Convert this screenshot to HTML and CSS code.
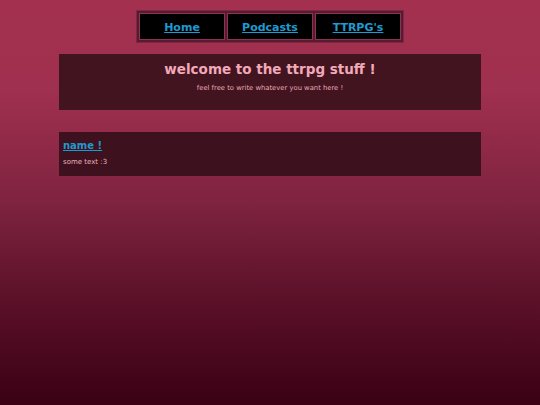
FILE: index.html
```html
<!DOCTYPE html>
<html>
<head>
<meta charset="utf-8">
<link rel="stylesheet" href="styles.css">
</head>
<body>
<div class="page">
  <nav class="nav">
    <a class="nav-cell" href="#">Home</a>
    <a class="nav-cell" href="#">Podcasts</a>
    <a class="nav-cell" href="#">TTRPG's</a>
  </nav>
  <header class="hero">
    <h1 class="hero-title">welcome to the ttrpg stuff !</h1>
    <p class="hero-sub">feel free to write whatever you want here !</p>
  </header>
  <section class="card">
    <a class="card-title" href="#">name !</a>
    <p class="card-text">some text :3</p>
  </section>
</div>
</body>
</html>
```
FILE: styles.css
```css
html, body {
  margin: 0;
  padding: 0;
  height: 100%;
}
body {
  background: linear-gradient(to bottom, #a3304f 0%, #a0304f 22%, #7e2340 50%, #5a1028 75%, #3a0014 100%);
  font-family: "DejaVu Sans", Verdana, sans-serif;
  min-height: 405px;
}
.page {
  display: flex;
  flex-direction: column;
  align-items: center;
  padding-top: 10px;
}
.nav {
  display: flex;
  gap: 2px;
  padding: 2px;
  background: #5a1a32;
  border: 1px solid #7a2844;
}
.nav-cell {
  box-sizing: border-box;
  width: 86px;
  height: 27px;
  display: flex;
  align-items: center;
  justify-content: center;
  padding-top: 2px;
  background: #000;
  border: 1px solid #8a3352;
  color: #1d9bd1;
  font-weight: bold;
  font-size: 11px;
  text-decoration: underline;
}
.hero {
  box-sizing: border-box;
  width: 422px;
  height: 56px;
  margin-top: 11px;
  background: #421420;
  display: flex;
  flex-direction: column;
  align-items: center;
  padding-top: 6px;
}
.hero-title {
  margin: 0;
  font-size: 13.5px;
  font-weight: bold;
  color: #f2a9b8;
  line-height: 18px;
}
.hero-sub {
  margin: 6px 0 0;
  font-size: 6.8px;
  color: #e9a7b6;
  line-height: 9px;
}
.card {
  box-sizing: border-box;
  width: 422px;
  height: 44px;
  margin-top: 22px;
  background: #3d111d;
  padding: 7px 4px;
  display: flex;
  flex-direction: column;
  align-items: flex-start;
}
.card-title {
  font-size: 10px;
  font-weight: bold;
  color: #1d9bd1;
  text-decoration: underline;
  line-height: 13px;
}
.card-text {
  margin: 6px 0 0;
  font-size: 7px;
  color: #eab2bf;
  line-height: 9px;
}
```
